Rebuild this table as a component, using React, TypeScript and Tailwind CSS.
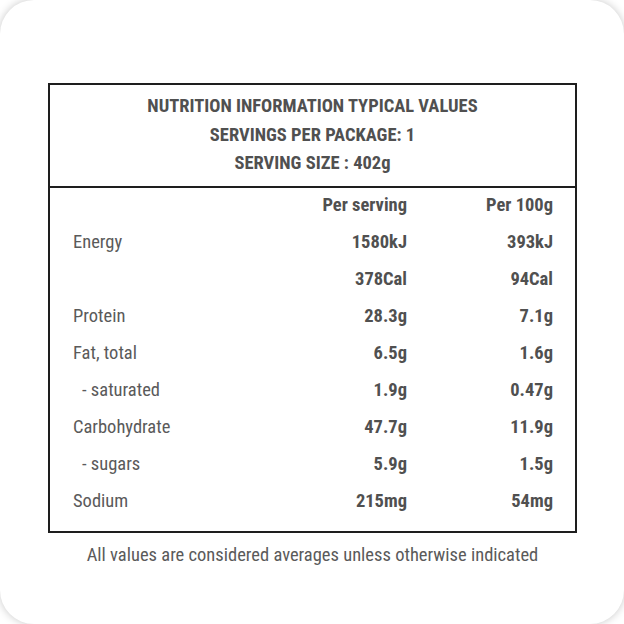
const rows: { label: string; indent?: boolean; serving: string; per100: string }[] = [
  { label: 'Energy', serving: '1580kJ', per100: '393kJ' },
  { label: '', serving: '378Cal', per100: '94Cal' },
  { label: 'Protein', serving: '28.3g', per100: '7.1g' },
  { label: 'Fat, total', serving: '6.5g', per100: '1.6g' },
  { label: '- saturated', indent: true, serving: '1.9g', per100: '0.47g' },
  { label: 'Carbohydrate', serving: '47.7g', per100: '11.9g' },
  { label: '- sugars', indent: true, serving: '5.9g', per100: '1.5g' },
  { label: 'Sodium', serving: '215mg', per100: '54mg' },
]

export default function App() {
  return (
    <div
      className="w-[624px] h-[624px] bg-white overflow-hidden text-[#5a5a5a] font-stretch-condensed"
      style={{ fontFamily: '"Roboto Condensed", "Liberation Sans Narrow", Roboto, sans-serif' }}
    >
      <div className="w-full h-full rounded-[34px] bg-white shadow-[0_0_8px_rgba(0,0,0,0.22)] pt-[83px] pl-[48px]">
        <div className="w-[529px] border-2 border-[#1e1e1e]">
          <div className="border-b-2 border-[#1e1e1e] pt-[7px] pb-[8px] text-center text-[18.5px] leading-[28.5px] font-bold text-[#505050]">
            <div>NUTRITION INFORMATION TYPICAL VALUES</div>
            <div>SERVINGS PER PACKAGE: 1</div>
            <div>SERVING SIZE : 402g</div>
          </div>
          <div className="pb-[10px] text-[18.5px]">
            <div className="flex h-[37px] items-center pl-[23px] pr-[22px]">
              <div className="flex-1" />
              <div className="w-[120px] text-right font-bold text-[#505050]">Per serving</div>
              <div className="w-[146px] text-right font-bold text-[#505050]">Per 100g</div>
            </div>
            {rows.map((row, i) => (
              <div key={i} className="flex h-[37px] items-center pl-[23px] pr-[22px]">
                <div className={row.indent ? 'flex-1 pl-[9px]' : 'flex-1'}>{row.label}</div>
                <div className="w-[120px] text-right font-bold text-[#505050]">{row.serving}</div>
                <div className="w-[146px] text-right font-bold text-[#505050]">{row.per100}</div>
              </div>
            ))}
          </div>
        </div>
        <p className="w-[529px] mt-[10px] text-center text-[18.5px] leading-[24px]">
          All values are considered averages unless otherwise indicated
        </p>
      </div>
    </div>
  )
}
